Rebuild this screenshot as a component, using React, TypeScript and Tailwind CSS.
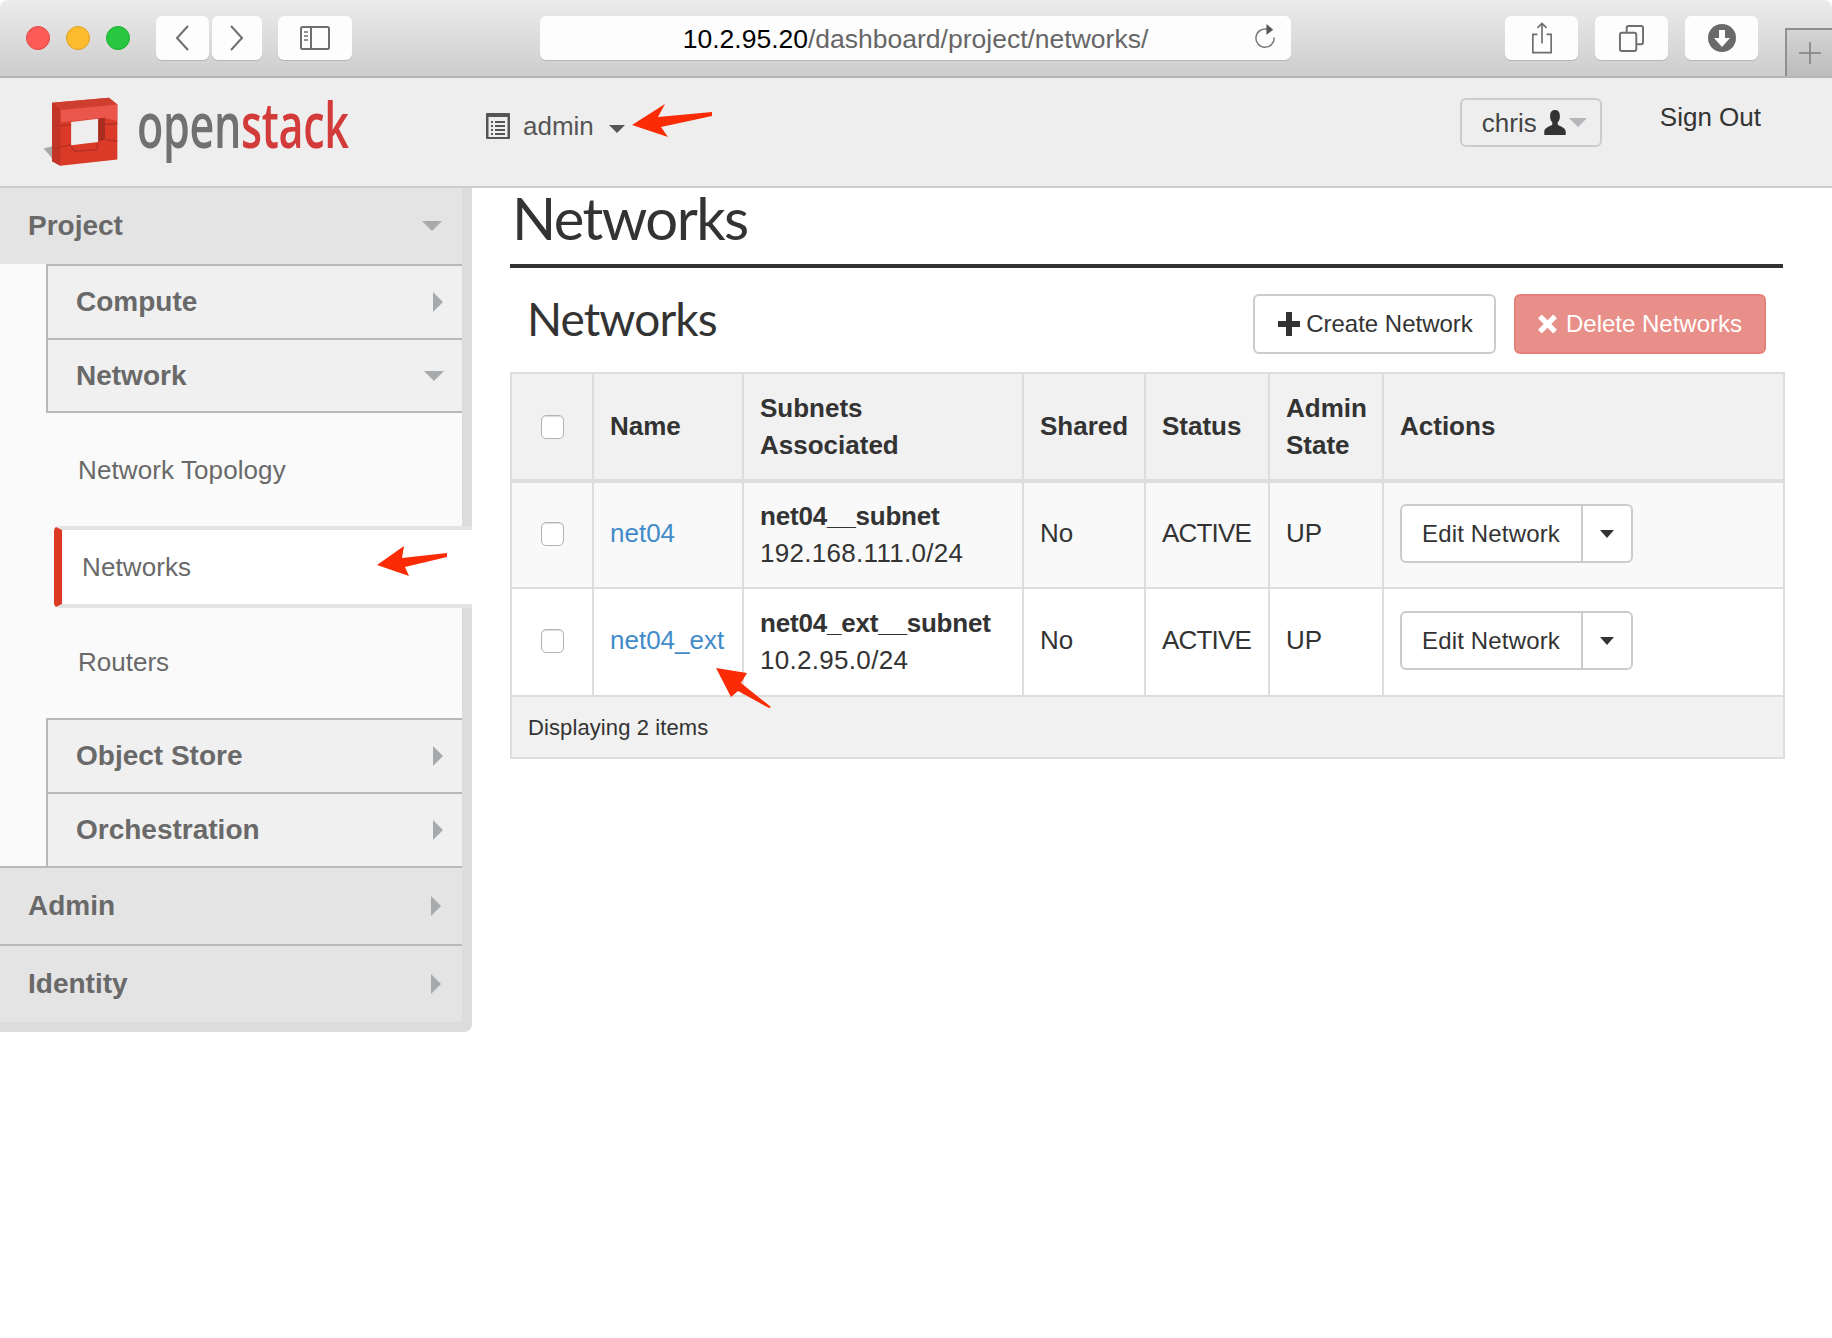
const sans = "font-['Liberation_Sans',Arial,sans-serif]";

function Caret({ dir, className = "" }: { dir: "down" | "right"; className?: string }) {
  const points = dir === "down" ? "0,0 20,0 10,10" : "0,0 10,10 0,20";
  return (
    <svg
      viewBox={dir === "down" ? "0 0 20 10" : "0 0 10 20"}
      className={(dir === "down" ? "w-[20px] h-[10px] " : "w-[10px] h-[20px] ") + className}
    >
      <polygon points={points} fill="#a6aaad" />
    </svg>
  );
}

function ToolbarButton({ className, children }: { className: string; children: React.ReactNode }) {
  return (
    <div className={"h-[44px] bg-[#fdfdfd] rounded-[6px] shadow-[0_1px_0_#b5b5b5] flex items-center justify-center " + className}>
      {children}
    </div>
  );
}

function BrowserBar() {
  return (
    <div className="h-[78px] shrink-0 flex items-start pt-[16px] bg-linear-to-b from-[#ececec] to-[#cdcdcd] border-b-2 border-[#b4b4b4] rounded-t-[8px] relative">
      <div className="flex items-center gap-[16px] ml-[26px] mt-[10px] w-[104px]">
        <span className="w-[24px] h-[24px] rounded-full bg-[#fc5b57] border border-[#e2463f]" />
        <span className="w-[24px] h-[24px] rounded-full bg-[#fdbc2e] border border-[#dfa023]" />
        <span className="w-[24px] h-[24px] rounded-full bg-[#27c83f] border border-[#1dad2b]" />
      </div>
      <ToolbarButton className="w-[53px] ml-[26px]">
        <svg viewBox="0 0 16 26" className="w-[16px] h-[26px] mr-[2px]" fill="none" stroke="#6e6e6e" strokeWidth="2">
          <path d="M14 1 3 13l11 12" />
        </svg>
      </ToolbarButton>
      <ToolbarButton className="w-[50px] ml-[3px]">
        <svg viewBox="0 0 16 26" className="w-[16px] h-[26px]" fill="none" stroke="#6e6e6e" strokeWidth="2">
          <path d="M2 1l11 12L2 25" />
        </svg>
      </ToolbarButton>
      <ToolbarButton className="w-[74px] ml-[16px]">
        <svg viewBox="0 0 30 24" className="w-[30px] h-[24px]" fill="none" stroke="#6e6e6e" strokeWidth="2">
          <rect x="1" y="1" width="28" height="22" rx="1.500" />
          <path d="M11 1v22" />
          <path d="M4 6h4M4 10h4M4 14h4" strokeWidth="1.6" />
        </svg>
      </ToolbarButton>
      <ToolbarButton className="w-[751px] ml-[188px] relative">
        <span className="text-[26.5px] text-[#666] leading-none mt-[2px]">
          <span className="text-black">10.2.95.20</span>/dashboard/project/networks/
        </span>
        <svg viewBox="0 0 24 28" className="absolute right-[14px] top-[8px] w-[23px] h-[27px]" fill="none" stroke="#7a7a7a" strokeWidth="1.6">
          <path d="M14 5.500A9.500 9.500 0 1 0 21 14" />
          <polygon points="13,0 20,6 13,11" fill="#555" stroke="none" />
        </svg>
      </ToolbarButton>
      <ToolbarButton className="w-[73px] ml-[214px]">
        <svg viewBox="0 0 24 36" className="w-[22px] h-[34px]" fill="none" stroke="#6e6e6e" strokeWidth="1.8">
          <path d="M7 14H2v20h20V14h-5M12 24V2M7 7l5-5 5 5" />
        </svg>
      </ToolbarButton>
      <ToolbarButton className="w-[73px] ml-[17px]">
        <svg viewBox="0 0 26 28" className="w-[25px] h-[27px]" fill="none" stroke="#6e6e6e" strokeWidth="2">
          <rect x="1" y="8" width="17" height="19" rx="2" />
          <path d="M8 8V3a2 2 0 0 1 2-2h13a2 2 0 0 1 2 2v15a2 2 0 0 1-2 2h-5" />
        </svg>
      </ToolbarButton>
      <ToolbarButton className="w-[73px] ml-[17px]">
        <svg viewBox="0 0 28 28" className="w-[28px] h-[28px]">
          <circle cx="14" cy="14" r="14" fill="#6a6a6a" />
          <path d="M11 6h6v8h5l-8 9-8-9h5z" fill="#fdfdfd" />
        </svg>
      </ToolbarButton>
      <div className="absolute left-[1785px] top-[28px] w-[47px] h-[48px] bg-linear-to-b from-[#d4d4d4] to-[#bdbdbd] border-l-2 border-t-2 border-[#8f8f8f] flex items-center justify-center">
        <svg viewBox="0 0 24 24" className="w-[24px] h-[24px]" stroke="#7d7d7d" strokeWidth="1.5">
          <path d="M12 1v22M1 12h22" />
        </svg>
      </div>
    </div>
  );
}

function Logo() {
  return (
    <div className="flex items-start w-[440px] shrink-0 ml-[42px]">
      <svg viewBox="70 50 230 215" className="w-[77px] h-[72px] mt-[18px] shrink-0">
        <polygon points="75,207 100,200 112,250" fill="#a9a9a9" />
        <polygon points="100,70 270,55 295,75 295,240 125,258 100,245" fill="#db3a29" />
        <polygon points="100,70 270,55 295,75 125,92" fill="#cf3f30" />
        <polygon points="125,92 295,75 295,125 255,115 160,125 125,130" fill="#ea564c" />
        <polygon points="100,70 125,92 125,258 100,245" fill="#c23426" />
        <polygon points="157,128 238,118 238,187 157,197" fill="#eeeeee" />
        <polygon points="238,118 258,115 258,180 238,187" fill="#a82c20" />
        <path d="M100 140l57-3M100 208l57-12M258 135l37-3M258 180l37 5M157 200l10 15 68-5 0-20" stroke="#b53023" strokeWidth="4" fill="none" />
      </svg>
      <div className="w-[211px] ml-[18px] mt-[1px] h-[90px] blur-[0.6px]">
        <div className="inline-block origin-left scale-x-[0.674] whitespace-nowrap font-['Open_Sans',sans-serif] font-semibold text-[64px] leading-[90px] tracking-[-0.5px]">
          <span className="text-[#717171]">open</span>
          <span className="text-[#d23b3a]">stack</span>
        </div>
      </div>
    </div>
  );
}

function TopHeader() {
  return (
    <div className="h-[110px] shrink-0 flex items-start bg-[#eeeeee] border-b-2 border-[#cccccc] relative">
      <Logo />
      <div className="flex items-center ml-[4px] mt-[32px] h-[32px]">
        <svg viewBox="0 0 24 26" className="w-[24px] h-[26px]">
          <rect x="0" y="0" width="24" height="26" rx="1" fill="#555" />
          <rect x="2.500" y="4" width="19" height="20" fill="#eee" />
          <path d="M5 8h2v2H5zM5 12h2v2H5zM5 16h2v2H5zM5 20h2v2H5zM9 8h10v2H9zM9 12h10v2H9zM9 16h10v2H9zM9 20h10v2H9z" fill="#555" />
        </svg>
        <span className="text-[26px] text-[#555] ml-[13px] leading-none">admin</span>
        <svg viewBox="0 0 16 8" className="w-[16px] h-[8px] ml-[15px] mt-[6px]">
          <polygon points="0,0 16,0 8,8" fill="#555" />
        </svg>
      </div>
      <div className="ml-auto mt-[20px] w-[142px] h-[49px] border-2 border-[#ccc] rounded-[6px] flex items-center pl-[20px] bg-[#eeeeee]">
        <span className="text-[26px] text-[#444] leading-none">chris</span>
        <svg viewBox="0 0 24 28" className="w-[24px] h-[25px] ml-[6px]">
          <path d="M12 0c4 0 5.500 3 5.500 7 0 3-1 5.500-2.500 7v2c0 2 9 3 9 8v4H0v-4c0-5 9-6 9-8v-2C7.500 12.500 6.500 10 6.500 7 6.500 3 8 0 12 0z" fill="#333" />
        </svg>
        <svg viewBox="0 0 18 9" className="w-[18px] h-[9px] ml-[2px]">
          <polygon points="0,0 18,0 9,9" fill="#b6b6ba" />
        </svg>
      </div>
      <span className="text-[26px] text-[#333] leading-none ml-[58px] mr-[71px] mt-[26px]">Sign Out</span>
    </div>
  );
}

function PanelRow({ label, open = false }: { label: string; open?: boolean }) {
  return (
    <div className="flex items-center justify-between bg-[#e4e4e4] pl-[28px] pr-[20px] h-full font-bold text-[28px] text-[#696969]">
      <span>{label}</span>
      {open ? <Caret dir="down" /> : <Caret dir="right" className="mr-[1px]" />}
    </div>
  );
}

function SubRow({ label, open = false, h, last = false }: { label: string; open?: boolean; h: string; last?: boolean }) {
  return (
    <div
      className={
        "flex items-center justify-between bg-[#f0f0f0] border-l-2 border-t-2 border-[#b9b9b9] pl-[28px] pr-[18px] font-bold text-[28px] text-[#696969] " +
        h +
        (last ? " border-b-2" : "")
      }
    >
      <span>{label}</span>
      {open ? <Caret dir="down" /> : <Caret dir="right" className="mr-[1px]" />}
    </div>
  );
}

function Sidebar() {
  return (
    <aside className="w-[472px] shrink-0 self-start bg-[#dcdcdc] pr-[10px] pb-[10px] rounded-br-[8px]">
      <div className="h-[76px]">
        <PanelRow label="Project" open />
      </div>
      <div className="bg-[#fafafa] pl-[46px]">
        <SubRow label="Compute" h="h-[74px]" />
        <SubRow label="Network" open h="h-[75px]" last />
        <div className="h-[113px] flex items-center pl-[32px] pt-[2px] text-[26px] tracking-[0.1px] text-[#696969]">Network Topology</div>
        <div className="h-[82px] -mr-[10px] ml-[8px] flex items-center bg-white border-y-4 border-[#e4e4e4] border-l-8 border-l-[#dc3a25] rounded-l-[5px] pl-[20px] text-[26px] tracking-[0.1px] text-[#696969]">
          Networks
        </div>
        <div className="h-[110px] flex items-center pl-[32px] pb-[2px] text-[26px] text-[#696969]">Routers</div>
        <SubRow label="Object Store" h="h-[74px]" />
        <SubRow label="Orchestration" h="h-[74px]" />
      </div>
      <div className="h-[78px] border-t-2 border-[#b9b9b9]">
        <PanelRow label="Admin" />
      </div>
      <div className="h-[78px] border-t-2 border-[#b9b9b9]">
        <PanelRow label="Identity" />
      </div>
    </aside>
  );
}

function Checkbox() {
  return <span className="block mx-auto w-[23px] h-[24px] bg-white border border-[#b4b4b4] rounded-[5px] shadow-[inset_0_1px_1px_#ddd]" />;
}

function EditButton() {
  return (
    <div className="inline-flex w-[233px] h-[59px] bg-white border-2 border-[#ccc] rounded-[6px] text-[24px] tracking-[0.15px] text-[#333] align-top">
      <span className="w-[181px] flex items-center justify-center border-r-2 border-[#ccc] pr-[1px]">Edit Network</span>
      <span className="flex-1 flex items-center justify-center">
        <svg viewBox="0 0 14 8" className="w-[14px] h-[8px] mt-[2px]">
          <polygon points="0,0 14,0 7,8" fill="#333" />
        </svg>
      </span>
    </div>
  );
}

const rows = [
  { name: "net04", subnet: "net04__subnet", cidr: "192.168.111.0/24", bg: "bg-[#f9f9f9]", h: "h-[107px]" },
  { name: "net04_ext", subnet: "net04_ext__subnet", cidr: "10.2.95.0/24", bg: "bg-white", h: "h-[108px]" },
];

function NetworksTable() {
  const th = "border-2 border-[#dddddd] border-b-4 pl-[16px] pr-[8px] text-left font-bold leading-[37px] align-middle";
  const td = "border-2 border-[#dddddd] pl-[16px] pr-[8px] align-middle leading-[37px]";
  const one = td + " pb-[4px]";
  return (
    <table className="table-fixed border-collapse w-[1273px] text-[26px] text-[#333]">
      <colgroup>
        <col className="w-[82px]" />
        <col className="w-[150px]" />
        <col className="w-[280px]" />
        <col className="w-[122px]" />
        <col className="w-[124px]" />
        <col className="w-[114px]" />
        <col className="w-[401px]" />
      </colgroup>
      <thead>
        <tr className="h-[108px] bg-[#f1f1f1]">
          <th className="border-2 border-[#dddddd] border-b-4 align-middle">
            <Checkbox />
          </th>
          <th className={th}>Name</th>
          <th className={th}>
            Subnets
            <br />
            Associated
          </th>
          <th className={th}>Shared</th>
          <th className={th}>Status</th>
          <th className={th}>
            Admin
            <br />
            State
          </th>
          <th className={th}>Actions</th>
        </tr>
      </thead>
      <tbody>
        {rows.map((r) => (
          <tr key={r.name} className={r.bg + " " + r.h}>
            <td className="border-2 border-[#dddddd] align-middle pb-[2px]">
              <Checkbox />
            </td>
            <td className={one + " text-[#428bca]"}>{r.name}</td>
            <td className={td}>
              <strong className="font-bold tracking-[-0.2px]">{r.subnet}</strong>
              <br />
              <span className="tracking-[0.3px]">{r.cidr}</span>
            </td>
            <td className={one}>No</td>
            <td className={one + " tracking-[-0.8px]"}>ACTIVE</td>
            <td className={one}>UP</td>
            <td className={one}>
              <EditButton />
            </td>
          </tr>
        ))}
      </tbody>
      <tfoot>
        <tr className="h-[62px] bg-[#f1f1f1]">
          <td colSpan={7} className="border-2 border-[#dddddd] px-[16px] text-[22px] tracking-[0.1px] align-middle">
            Displaying 2 items
          </td>
        </tr>
      </tfoot>
    </table>
  );
}

function Main() {
  return (
    <main className="flex-1 pl-[38px]">
      <div className="w-[1273px] h-[80px] border-b-4 border-[#333333] flex items-start">
        <h1 className="ml-[2px] -mt-[3px] font-['Lato',sans-serif] text-[58px] leading-[66px] tracking-[-1.6px] text-[#333]">Networks</h1>
      </div>
      <div className="w-[1273px] h-[104px] flex justify-between pl-[17px] pr-[17px] pt-[26px]">
        <h2 className="-mt-[5px] font-['Lato',sans-serif] text-[46px] leading-[60px] tracking-[-0.9px] text-[#333]">Networks</h2>
        <div className="flex gap-[18px] items-start">
          <button className="w-[243px] h-[60px] bg-white border-2 border-[#ccc] rounded-[6px] flex items-center justify-center text-[24px] text-[#333] pl-[2px]">
            <svg viewBox="0 0 22 24" className="w-[22px] h-[24px] mr-[6px]">
              <path d="M8 0h6v9h8v6h-8v9H8v-9H0V9h8z" fill="#333" />
            </svg>
            Create Network
          </button>
          <button className="w-[252px] h-[60px] bg-[#e98f8a] border-2 border-[#e5807b] rounded-[6px] flex items-center justify-center text-[24px] text-white">
            <svg viewBox="0 0 20 20" className="w-[19px] h-[20px] mr-[9px]">
              <path d="M4 0l6 6 6-6 4 4-6 6 6 6-4 4-6-6-6 6-4-4 6-6-6-6z" fill="#fff" />
            </svg>
            Delete Networks
          </button>
        </div>
      </div>
      <NetworksTable />
    </main>
  );
}

export default function App() {
  return (
    <div className={"relative w-[1832px] h-[1338px] bg-white overflow-hidden flex flex-col " + sans}>
      <BrowserBar />
      <TopHeader />
      <div className="flex flex-1">
        <Sidebar />
        <Main />
      </div>
      {/* red annotation arrows on top of the screenshot */}
      <svg viewBox="0 0 1832 1338" className="absolute inset-0 w-[1832px] h-[1338px] pointer-events-none">
        <polygon points="632,125 665,104 658,117 712,112 712,116 661,127 668,137" fill="#fb2c05" />
        <polygon points="377,565 404,546 402,558 447,553 447,557 405,567 409,576" fill="#fb2c05" />
        <polygon points="716,668 747,673 741,683 771,707 769,708 738,691 731,697" fill="#fb2c05" />
      </svg>
    </div>
  );
}
